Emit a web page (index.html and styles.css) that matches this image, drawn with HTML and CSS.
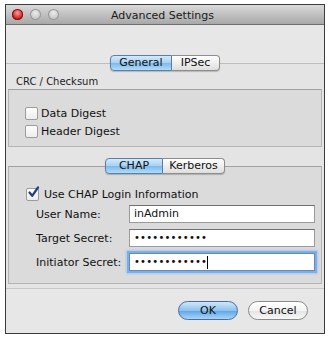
FILE: index.html
```html
<!DOCTYPE html>
<html>
  <head>
    <title>Advanced Settings</title>
    <link rel="stylesheet" href="styles.css">
  </head>
  <body>
    <div class="window">
      <div class="titlebar">
        <div class="lights">
          <span class="light light-red"></span>
          <span class="light"></span>
          <span class="light"></span>
        </div>
        <div class="title">Advanced Settings</div>
      </div>

      <div class="content">
        <div class="tabs tabs-top">
          <span class="tab tab-selected">General</span>
          <span class="tab">IPSec</span>
        </div>

        <div class="tabview">
          <div class="section-label">CRC / Checksum</div>
          <div class="box box-crc">
            <label class="check-row"><span class="checkbox"></span>Data Digest</label>
            <label class="check-row"><span class="checkbox"></span>Header Digest</label>
          </div>

          <div class="tabs tabs-inner">
            <span class="tab tab-selected">CHAP</span>
            <span class="tab">Kerberos</span>
          </div>
          <div class="box box-chap">
            <label class="check-row check-chap">
              <span class="checkbox checkbox-on">
                <svg width="13" height="13" viewBox="0 0 13 13">
                  <path d="M2.5 6.5 L5.2 9.8 L11 1.5" fill="none" stroke="#1d3f8a" stroke-width="2.2" stroke-linecap="round" stroke-linejoin="round"/>
                </svg>
              </span>Use CHAP Login Information
            </label>
            <div class="field-row">
              <span class="field-label">User Name:</span>
              <span class="field">inAdmin</span>
            </div>
            <div class="field-row">
              <span class="field-label">Target Secret:</span>
              <span class="field field-dots">••••••••••••</span>
            </div>
            <div class="field-row">
              <span class="field-label">Initiator Secret:</span>
              <span class="field field-dots field-focus">••••••••••••<span class="caret"></span></span>
            </div>
          </div>
        </div>

        <div class="buttons">
          <button class="btn btn-default">OK</button>
          <button class="btn">Cancel</button>
        </div>
      </div>
    </div>
  </body>
</html>
```

FILE: styles.css
```css
body {
  margin: 0;
  background-color: white;
  font-family: "DejaVu Sans", "Liberation Sans", sans-serif;
  color: #111;
}

.window {
  margin: 4px 0 0 5px;
  width: 318px;
  height: 328px;
  border: 1px solid #3c3c3c;
  background-color: #e7e7e7;
  display: flex;
  flex-direction: column;
}

.titlebar {
  height: 19px;
  border-bottom: 1px solid #6f6f6f;
  background: linear-gradient(#dadada, #a8a8a8);
  display: flex;
  align-items: center;
}

.lights {
  display: flex;
  gap: 7px;
  padding-left: 6px;
}

.light {
  width: 11px;
  height: 11px;
  border-radius: 50%;
  background: radial-gradient(circle at 50% 35%, #ececec, #b2b2b2);
  box-shadow: inset 0 0 0 1px #969696;
}

.light-red {
  background: radial-gradient(circle at 50% 35%, #f7a0a0, #d42222 60%, #9a0d0d);
  box-shadow: inset 0 0 0 1px #8a1010;
}

.title {
  flex: 1;
  text-align: center;
  font-size: 11px;
  color: #1a1a1a;
  margin-left: -58px;
  padding-top: 1px;
}

.content {
  flex: 1;
  display: flex;
  flex-direction: column;
}

.tabs {
  display: flex;
  justify-content: center;
  position: relative;
  z-index: 1;
}

.tabs-top {
  margin-top: 30px;
}

.tab {
  height: 14px;
  font-size: 11px;
  line-height: 14px;
  text-align: center;
  border: 1px solid #8d8d8d;
  background: linear-gradient(#ffffff, #ededed 55%, #dedede);
  box-shadow: 0 1px 1px rgba(0, 0, 0, 0.2);
}

.tab:first-child {
  border-radius: 4px 0 0 4px;
}

.tab:last-child {
  border-radius: 0 4px 4px 0;
  border-left: none;
}

.tab-selected {
  background: linear-gradient(#d3eafb, #a6d1f3 50%, #7dbaeb 52%, #b3dbf7);
  border-color: #5b7fa6;
}

.tabs-top .tab-selected {
  width: 60px;
}

.tabs-top .tab:last-child {
  width: 47px;
}

.tabview {
  margin-top: -8px;
  border-top: 1px solid #bdbdbd;
  border-bottom: 1px solid #c6c6c6;
  background-color: #e4e4e4;
  display: flex;
  flex-direction: column;
  padding: 0 2px 4px;
}

.section-label {
  margin: 11px 0 0 8px;
  font-size: 10px;
  line-height: 14px;
  color: #222;
}

.box {
  border: 1px solid #b4b4b4;
  border-top-color: #a2a2a2;
  background-color: #dbdbdb;
}

.box-crc {
  height: 58px;
  padding: 17px 0 0 16px;
  box-sizing: border-box;
  display: flex;
  flex-direction: column;
  gap: 5px;
}

.check-row {
  display: flex;
  align-items: center;
  gap: 3px;
  font-size: 11px;
  line-height: 13px;
}

.checkbox {
  width: 11px;
  height: 11px;
  border: 1px solid #9c9c9c;
  border-radius: 2px;
  background: linear-gradient(#ffffff, #ececec);
  position: relative;
}

.checkbox svg {
  position: absolute;
  left: 0;
  top: -3px;
}

.tabs-inner {
  margin-top: 11px;
}

.tabs-inner .tab-selected {
  width: 56px;
}

.tabs-inner .tab:last-child {
  width: 61px;
}

.box-chap {
  margin-top: -8px;
  height: 118px;
  box-sizing: border-box;
  padding: 21px 0 0 0;
  display: flex;
  flex-direction: column;
}

.check-chap {
  padding-left: 17px;
  gap: 5px;
  margin-bottom: 4px;
}

.field-row {
  display: flex;
  align-items: center;
  padding-left: 27px;
  margin-bottom: 6px;
}

.field-label {
  width: 93px;
  font-size: 11px;
}

.field {
  width: 186px;
  height: 18px;
  box-sizing: border-box;
  border: 1px solid #9a9a9a;
  border-top-color: #707070;
  background-color: white;
  font-size: 11px;
  line-height: 16px;
  padding-left: 4px;
  display: flex;
  align-items: center;
}

.field-dots {
  font-size: 10px;
  letter-spacing: 0.2px;
}

.field-focus {
  box-shadow: 0 0 0 2px #7eaee3, 0 0 2px 3px #a9c9ee;
  border-color: #6689b8;
}

.caret {
  width: 1px;
  height: 13px;
  background-color: black;
}

.buttons {
  display: flex;
  justify-content: flex-end;
  gap: 10px;
  padding: 12px 16px 0 0;
}

.btn {
  height: 19px;
  width: 60px;
  padding: 0;
  border-radius: 10px;
  border: 1px solid #8a8a8a;
  background: linear-gradient(#ffffff, #f3f3f3 50%, #e3e3e3 52%, #f8f8f8);
  font-family: "DejaVu Sans", sans-serif;
  font-size: 11px;
  color: #111;
}

.btn-default {
  border-color: #4a6d9c;
  background: linear-gradient(#cfe6fa, #8cc2ef 50%, #5ea6e6 52%, #a9d6f7);
}
```
